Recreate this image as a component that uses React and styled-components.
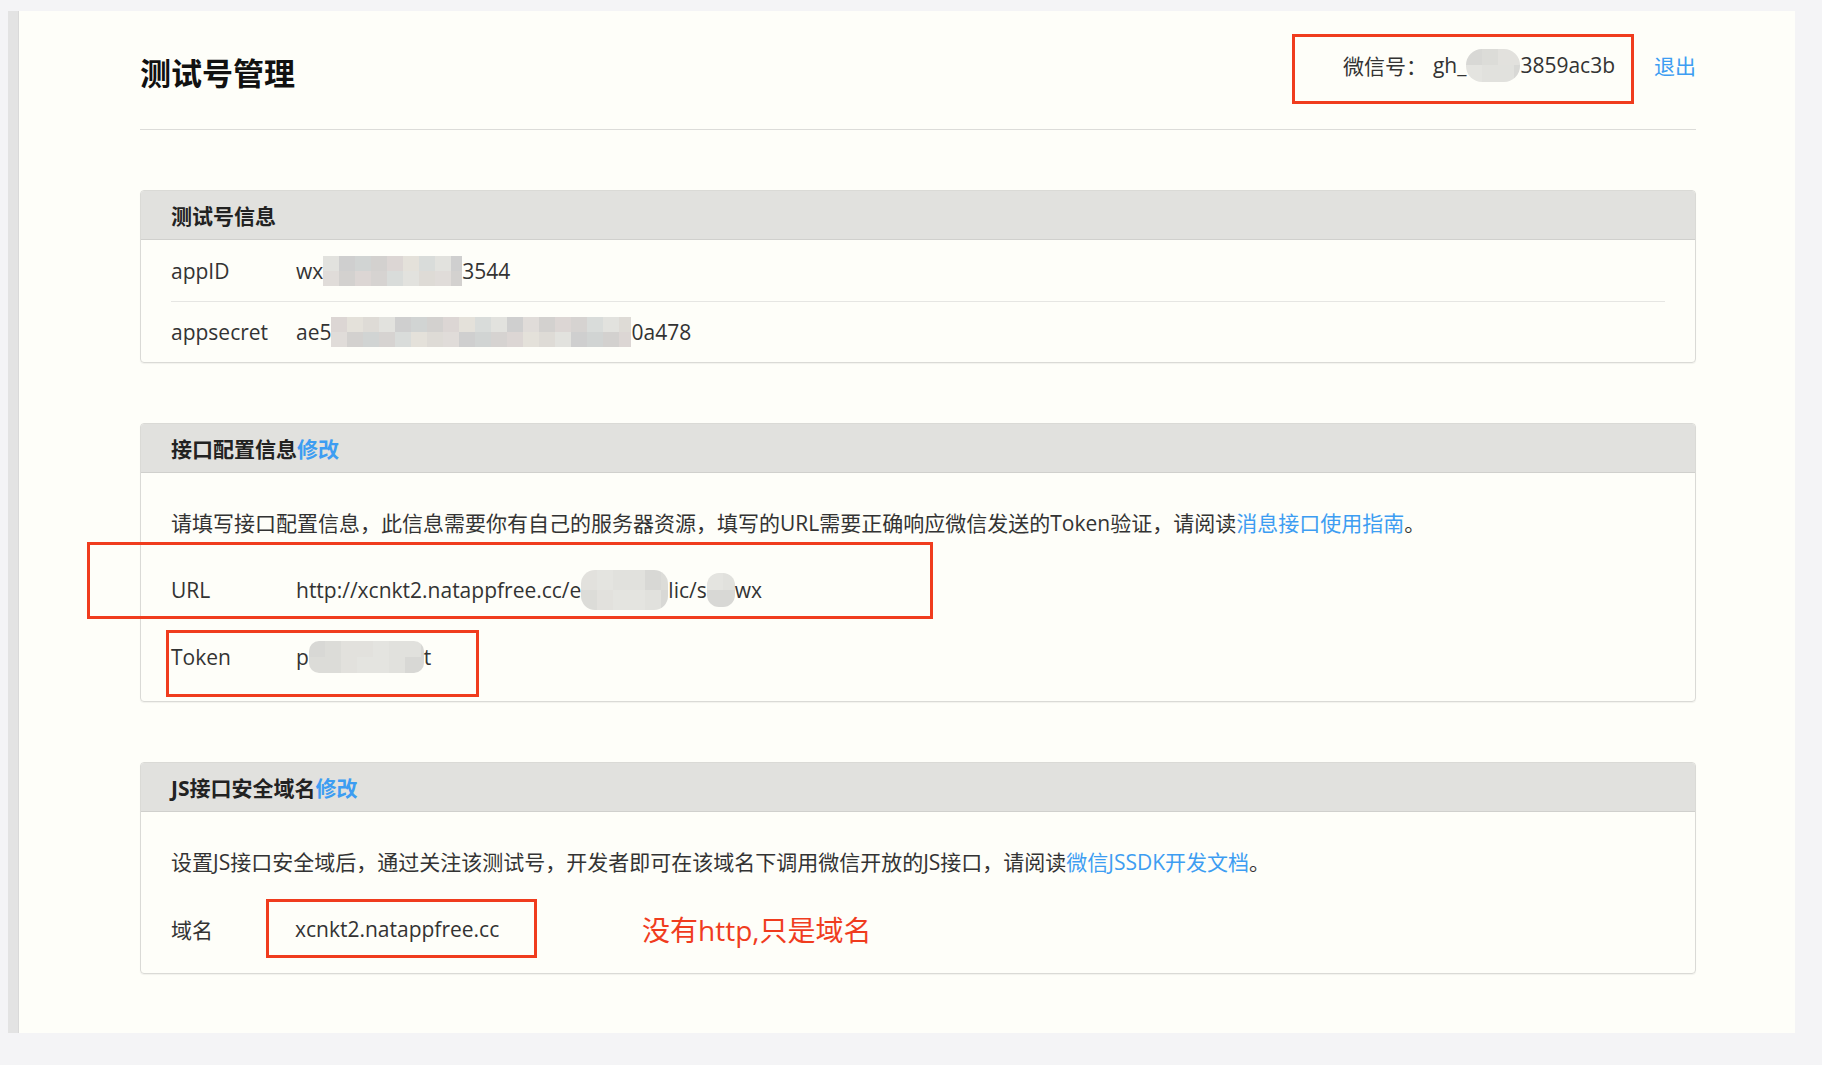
import styled, { createGlobalStyle } from 'styled-components';

const GlobalStyle = createGlobalStyle`
  html, body {
    margin: 0;
    padding: 0;
    background: #f4f4f6;
  }
  body {
    font-family: "Open Sans", "Noto Sans CJK SC", sans-serif;
    color: #333;
  }
`;

const GRAYS = ['#d6d3d1', '#dedbd6', '#d1d4d3', '#e4e1da', '#cfcfcf', '#dcd6d4', '#e2e2de', '#d3d1cf', '#d9dcda', '#e0dcd9'];
const SOFT = ['#e1e1dd', '#dcdcd8', '#e4e4e0', '#d8d8d5', '#e2e1dd'];

function Mosaic({ width, height, round = 0, soft = false, seed = 0 }) {
  const cols = Math.ceil(width / 16);
  const palette = soft ? SOFT : GRAYS;
  const cells = [];
  for (let i = 0; i < cols * 2; i++) {
    cells.push(palette[(i * 7 + seed * 3 + (i % 3)) % palette.length]);
  }
  return (
    <MosaicBox $w={width} $h={height} $round={round} $cols={cols}>
      {cells.map((c, i) => (
        <MosaicCell key={i} $c={c} />
      ))}
    </MosaicBox>
  );
}

function App() {
  return (
    <>
      <GlobalStyle />
      <Page>
        <SideEdge />
        <Panel>
          <TopBar>
            <PageTitle>测试号管理</PageTitle>
            <Account>
              <AccountBox>
                <AccountKey>微信号：</AccountKey>
                gh_
                <Mosaic width={54} height={33} round={16} soft seed={1} />
                3859ac3b
              </AccountBox>
              <Logout>退出</Logout>
            </Account>
          </TopBar>

          <Section>
            <SectionHead>测试号信息</SectionHead>
            <InfoList>
              <InfoRow>
                <Label>appID</Label>
                <Value>
                  wx
                  <Mosaic width={139} height={30} seed={2} />
                  3544
                </Value>
              </InfoRow>
              <InfoRow>
                <Label>appsecret</Label>
                <Value>
                  ae5
                  <Mosaic width={300} height={30} seed={5} />
                  0a478
                </Value>
              </InfoRow>
            </InfoList>
          </Section>

          <Section>
            <SectionHead>
              接口配置信息<Link>修改</Link>
            </SectionHead>
            <SectionBody>
              <Line $h={69}>
                请填写接口配置信息，此信息需要你有自己的服务器资源，填写的URL需要正确响应微信发送的Token验证，请阅读
                <Link>消息接口使用指南</Link>。
              </Line>
              <Line>
                <Label>URL</Label>
                <Value>
                  http://xcnkt2.natappfree.cc/e
                  <Mosaic width={87} height={40} round={14} soft seed={3} />
                  lic/s
                  <Mosaic width={28} height={34} round={12} soft seed={4} />
                  wx
                </Value>
                <Mark $top={-14} $left={-84} $w={846} $h={77} />
              </Line>
              <Line>
                <Label>Token</Label>
                <Value>
                  p
                  <Mosaic width={115} height={32} round={10} soft seed={6} />
                  t
                </Value>
                <Mark $top={7} $left={-5} $w={313} $h={67} />
              </Line>
            </SectionBody>
          </Section>

          <Section>
            <SectionHead>
              JS接口安全域名<Link>修改</Link>
            </SectionHead>
            <SectionBody>
              <Line $h={69}>
                设置JS接口安全域后，通过关注该测试号，开发者即可在该域名下调用微信开放的JS接口，请阅读
                <Link>微信JSSDK开发文档</Link>。
              </Line>
              <Line>
                <Label>域名</Label>
                <DomainBox>xcnkt2.natappfree.cc</DomainBox>
                <Note>没有http,只是域名</Note>
              </Line>
            </SectionBody>
          </Section>
        </Panel>
      </Page>
    </>
  );
}

export default App;

const Page = styled.div`
  display: flex;
  padding: 11px 27px 32px 8px;
  min-height: 1065px;
  box-sizing: border-box;
`;

const SideEdge = styled.div`
  width: 11px;
  background: #e3e3e3;
  border-right: 1px solid #d9d9d9;
  box-sizing: border-box;
`;

const Panel = styled.main`
  flex: 1;
  background: #fefef9;
  padding: 0 99px 59px 121px;
`;

const TopBar = styled.header`
  display: flex;
  justify-content: space-between;
  align-items: flex-start;
  height: 119px;
  box-sizing: border-box;
  border-bottom: 1px solid #dcdcd9;
`;

const PageTitle = styled.h1`
  margin: 42px 0 0;
  font-size: 31px;
  line-height: 40px;
  font-weight: 700;
  color: #111;
`;

const Account = styled.div`
  display: flex;
  align-items: center;
  gap: 20px;
  margin-top: 23px;
`;

const AccountBox = styled.div`
  display: flex;
  align-items: center;
  width: 342px;
  height: 70px;
  box-sizing: border-box;
  border: 3px solid #f03c1e;
  padding: 0 16px 8px 0;
  justify-content: flex-end;
  font-size: 21px;
  color: #333;
  white-space: nowrap;
`;

const AccountKey = styled.span`
  margin-right: 6px;
`;

const Logout = styled.a`
  font-size: 21px;
  color: #3d9df2;
  padding-bottom: 8px;
  cursor: pointer;
`;

const Section = styled.section`
  margin-top: 60px;
  border: 1px solid #dadad6;
  border-radius: 4px;
  box-shadow: 0 1px 1px rgba(0, 0, 0, 0.05);
`;

const SectionHead = styled.h2`
  margin: 0;
  height: 49px;
  box-sizing: border-box;
  display: flex;
  align-items: center;
  padding-left: 30px;
  background: #e1e1de;
  border-bottom: 1px solid #d0d0cd;
  border-radius: 3px 3px 0 0;
  font-size: 21px;
  font-weight: 700;
  color: #222;
`;

const InfoList = styled.div`
  padding: 0 30px;
`;

const InfoRow = styled.div`
  display: flex;
  align-items: center;
  height: 61px;
  box-sizing: border-box;
  font-size: 21px;
  & + & {
    border-top: 1px solid #e6e6e3;
  }
`;

const SectionBody = styled.div`
  padding: 14px 30px 11px;
`;

const Line = styled.div`
  position: relative;
  display: flex;
  align-items: center;
  height: ${(p) => p.$h || 67}px;
  font-size: 21px;
  color: #333;
  white-space: nowrap;
`;

const Label = styled.span`
  width: 125px;
  flex-shrink: 0;
`;

const Value = styled.span`
  display: flex;
  align-items: center;
`;

const Link = styled.a`
  color: #3d9df2;
  cursor: pointer;
`;

const Mark = styled.span`
  position: absolute;
  top: ${(p) => p.$top}px;
  left: ${(p) => p.$left}px;
  width: ${(p) => p.$w}px;
  height: ${(p) => p.$h}px;
  border: 3px solid #f03c1e;
  box-sizing: border-box;
  pointer-events: none;
`;

const DomainBox = styled.span`
  display: flex;
  align-items: center;
  margin-left: -30px;
  width: 271px;
  height: 59px;
  box-sizing: border-box;
  padding-left: 26px;
  border: 3px solid #f03c1e;
`;

const Note = styled.span`
  margin-left: 105px;
  font-size: 28px;
  color: #f03c1e;
`;

const MosaicBox = styled.span`
  display: inline-grid;
  grid-template-columns: repeat(${(p) => p.$cols}, 16px);
  grid-template-rows: 1fr 1fr;
  width: ${(p) => p.$w}px;
  height: ${(p) => p.$h}px;
  border-radius: ${(p) => p.$round}px;
  overflow: hidden;
  flex-shrink: 0;
`;

const MosaicCell = styled.span`
  background: ${(p) => p.$c};
`;
